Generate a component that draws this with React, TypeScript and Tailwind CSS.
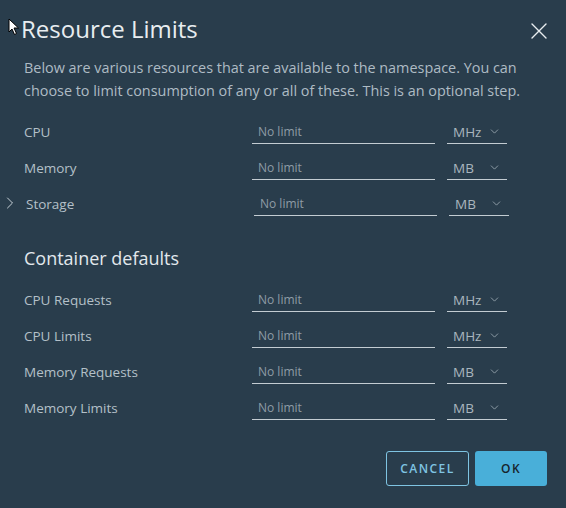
import { ChevronDown, ChevronRight } from 'lucide-react'

type Row = { label: string; unit: string; expandable?: boolean }

const limits: Row[] = [
  { label: 'CPU', unit: 'MHz' },
  { label: 'Memory', unit: 'MB' },
  { label: 'Storage', unit: 'MB', expandable: true },
]

const defaults: Row[] = [
  { label: 'CPU Requests', unit: 'MHz' },
  { label: 'CPU Limits', unit: 'MHz' },
  { label: 'Memory Requests', unit: 'MB' },
  { label: 'Memory Limits', unit: 'MB' },
]

function LimitRow({ label, unit, expandable }: Row) {
  return (
    <div className={`flex h-9 items-center ${expandable ? 'pl-[2px]' : ''}`}>
      <div className="relative w-[228px] text-[13.5px] text-[#b4c0c8]">
        {expandable && (
          <ChevronRight size={20} strokeWidth={1.2} className="absolute -left-[26px] -top-[1px] text-[#c8d2d8]" />
        )}
        {label}
      </div>
      <div className="flex h-6 w-[183px] items-center border-b border-[#c3ccd2] pl-[6px] text-[12px] text-[#8e9ca6]">
        No limit
      </div>
      <div className="ml-3 flex h-6 w-[60px] items-center justify-between border-b border-[#c3ccd2] pl-[6px] pr-[6px] text-[13.5px] text-[#a9b6be]">
        <span className="pt-[2px]">{unit}</span>
        <ChevronDown size={13} strokeWidth={1.4} className="text-[#a9b6be]" />
      </div>
    </div>
  )
}

export default function App() {
  return (
    <div
      className="relative h-[508px] w-[566px] overflow-hidden bg-[#293d4c]"
      style={{ fontFamily: '"Open Sans", "Noto Sans", sans-serif' }}
    >
      {/* mouse pointer from the capture */}
      <svg className="absolute left-[8px] top-[18px]" width="12" height="18" viewBox="0 0 12 18">
        <path d="M1 1 L1 14 L4 11 L6.5 16.5 L8.5 15.5 L6 10 L10.5 10 Z" fill="#fff" stroke="#000" strokeWidth="1" strokeLinejoin="round" />
      </svg>

      <div className="px-6 pt-[13px]">
        <div className="flex items-center justify-between">
          <h1 className="-ml-[3px] h-8 text-[24px] leading-8 text-[#e8edf0]">Resource Limits</h1>
          <button className="-mr-[5px] mt-[4px] text-[#e8edf0]">
            <svg width="16" height="16" viewBox="0 0 16 16" fill="none" stroke="currentColor" strokeWidth="1.4" strokeLinecap="round">
              <path d="M1 1 L15 15 M15 1 L1 15" />
            </svg>
          </button>
        </div>

        <p className="mt-[11px] text-[14.4px] leading-[23px] text-[#aebbc4]">
          Below are various resources that are available to the namespace. You can
          <br />
          choose to limit consumption of any or all of these. This is an optional step.
        </p>

        <div className="mt-3">
          {limits.map(r => (
            <LimitRow key={r.label} {...r} />
          ))}
        </div>

        <h2 className="mt-6 mb-3 h-6 text-[18px] leading-6 text-[#e2e8ec]">Container defaults</h2>

        <div>
          {defaults.map(r => (
            <LimitRow key={r.label} {...r} />
          ))}
        </div>

        <div className="mt-[25px] -mr-[5px] flex justify-end gap-[6px]">
          <button className="h-[35px] w-[83px] rounded-[3px] border border-[#7fc4e2] text-[12px] font-semibold tracking-[0.12em] text-[#7fc4e2]">
            CANCEL
          </button>
          <button className="h-[35px] w-[72px] rounded-[3px] bg-[#49afd9] text-[12px] font-semibold tracking-[0.12em] text-[#17242c]">
            OK
          </button>
        </div>
      </div>
    </div>
  )
}
